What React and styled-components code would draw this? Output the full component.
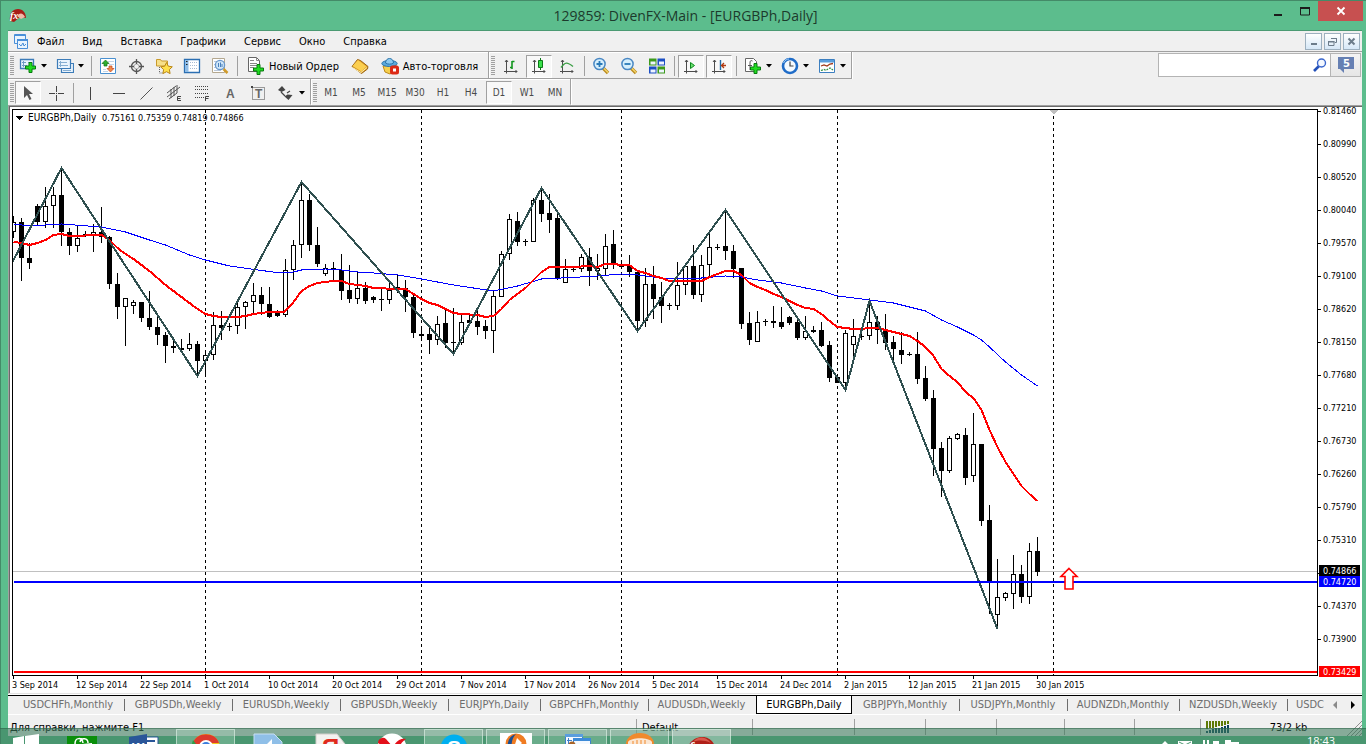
import React from 'react'
import styled, { createGlobalStyle } from 'styled-components'

const ui = `'DejaVu Sans Condensed', 'DejaVu Sans', 'Noto Sans', sans-serif`

const GlobalStyle = createGlobalStyle`
  * {
    box-sizing: border-box;
  }
  body {
    margin: 0;
    background: #ffffff;
    font-family: ${ui};
    font-size: 11px;
    color: #000000;
    overflow: hidden;
  }
  button {
    font: inherit;
    color: inherit;
    background: none;
    border: 0;
    padding: 0;
    margin: 0;
  }
  svg {
    display: block;
    flex: none;
  }
`

const Desktop = styled.div`
  position: relative;
  margin-right: 4px;
  height: 100vh;
  overflow: hidden;
  background: #5cbd8d;
`

const Window = styled.div`
  border: 1px solid #448a68;
  border-width: 1px 0 0 1px;
  padding: 0 4px 8px 7px;
`

const TitleBar = styled.header`
  display: grid;
  grid-template-columns: 1fr auto 1fr;
  height: 29px;
  margin-right: -1px;
`

const AppIcon = styled.div`
  padding: 7px 0 0 1px;
`

const Title = styled.h1`
  margin: 0;
  font-family: 'Open Sans', 'Noto Sans', sans-serif;
  font-size: 14px;
  font-weight: 400;
  line-height: 29px;
  color: #1c3a2c;
`

const WindowButtons = styled.div`
  display: flex;
  justify-content: flex-end;
  align-items: flex-start;
`

const WindowButton = styled.button`
  display: flex;
  justify-content: center;
  align-items: center;
  width: ${(p) => (p.$close ? '45px' : '27px')};
  height: 20px;
  background: ${(p) => (p.$close ? '#c75050' : 'transparent')};
`

const Client = styled.main`
  border-top: 1px solid #4a9a72;
  background: #f0f0f0;
`

const MenuBar = styled.nav`
  display: flex;
  align-items: center;
  height: 21px;
  padding: 0 2px 0 5px;
  border-bottom: 1px solid #a0a0a0;
`

const MenuItem = styled.button`
  padding: 1px 9px 0;
  line-height: 19px;
  &:hover {
    background: #d8e6f2;
  }
`

const Spacer = styled.div`
  flex: 1;
`

const MdiButtons = styled.div`
  display: flex;
  gap: 2px;
`

const MdiButton = styled.button`
  display: flex;
  justify-content: center;
  align-items: center;
  width: 17px;
  height: 17px;
  border: 1px solid #9db0bf;
  background: linear-gradient(#ffffff, #d6e8f7);
`

const ToolRow = styled.div`
  display: flex;
  height: ${(p) => p.$height}px;
`

const ToolBar = styled.div`
  display: flex;
  align-items: center;
  padding: 2px ${(p) => (p.$tight ? 1 : 3)}px 0 0;
  border: 1px solid #a0a0a0;
  border-width: 0 1px 1px 0;
  border-bottom-color: ${(p) => (p.$last ? 'transparent' : '#a0a0a0')};
  box-shadow: inset 0 1px 0 #ffffff, 1px 0 0 #ffffff;
`

const Grip = styled.div`
  width: 4px;
  height: 20px;
  margin: 0 ${(p) => (p.$wide ? 2 : 0)}px 0 2px;
  background: repeating-linear-gradient(#a0a0a0 0 1px, #f0f0f0 1px 2px);
`

const Divider = styled.div`
  width: 1px;
  height: 20px;
  margin: 0 2px 0 3px;
  background: #a0a0a0;
`

const ToolButton = styled.button`
  display: flex;
  justify-content: center;
  align-items: center;
  gap: 4px;
  width: ${(p) => p.$width || 28}px;
  height: 24px;
  color: ${(p) => (p.$dim ? '#4a4a4a' : '#000000')};
  font-size: ${(p) => (p.$dim ? '10px' : '11px')};
  white-space: nowrap;
  &[aria-pressed='true'] {
    width: 26px;
    height: 23px;
    margin: 0 1px;
    border: 1px solid #a0a0a0;
    border-right-color: #ffffff;
    border-bottom-color: #ffffff;
    background: #f8f8f8;
  }
`

const SearchBox = styled.label`
  display: flex;
  align-items: center;
  width: 173px;
  height: 24px;
  margin-top: 1px;
  padding-right: 3px;
  border: 1px solid #b4b4b4;
  background: #ffffff;
`

const SearchInput = styled.input`
  flex: 1;
  min-width: 0;
  border: 0;
  outline: 0;
  font: inherit;
`

const Messages = styled.button`
  display: flex;
  justify-content: center;
  align-items: center;
  width: 31px;
  height: 24px;
  margin: 1px 1px 0 -1px;
  border: 1px solid #b4b4b4;
  background: linear-gradient(#f4f4f4, #e6e6e6);
`

const ChartFrame = styled.section`
  display: grid;
  grid-template-columns: 1fr 44px;
  padding: 3px 0 0 3px;
  border: 1px solid #a0a0a0;
  border-right: 0;
  border-bottom-color: #e3e3e3;
  box-shadow: inset 1px 1px 0 #696969;
  background: #ffffff;
`

const Plot = styled.div`
  border: 1px solid #000000;
  height: 567px;
  overflow: hidden;
`

const Drawing = styled.svg`
  width: 100%;
  height: ${(p) => p.$height}px;
  overflow: ${(p) => (p.$spill ? 'visible' : 'hidden')};
  font-family: ${ui};
  font-size: 9px;
`

const TimeAxis = styled.div`
  grid-column: 1 / -1;
  height: 17px;
`

const Tabs = styled.div`
  display: flex;
  height: 21px;
  border-top: 1px solid #ffffff;
  border-bottom: 1px solid #ffffff;
  overflow: hidden;
`

const TabList = styled.div`
  display: flex;
  flex: 1;
  min-width: 0;
  padding-left: 5px;
  border-top: 1px solid #000000;
  overflow: hidden;
`

const Tab = styled.button`
  position: relative;
  flex: none;
  width: ${(p) => p.$width}px;
  height: 18px;
  padding-right: 2px;
  font-size: 11px;
  line-height: 16px;
  color: #6d6d6d;
  white-space: nowrap;
  overflow: hidden;
  text-align: center;
  &::after {
    content: '';
    position: absolute;
    right: 0;
    top: 3px;
    height: 12px;
    border-right: 1px solid #6d6d6d;
  }
  &[aria-selected='true'] {
    padding: 1px 0 0;
    color: #000000;
    background: #ffffff;
    border: 1px solid #000000;
    border-width: 0 1px 1px;
  }
  &[aria-selected='true']::after,
  &.plain::after {
    display: none;
  }
`

const TabScroll = styled.div`
  display: flex;
  align-items: center;
  justify-content: space-between;
  width: 36px;
  padding: 0 7px 1px;
  border-top: 1px solid #000000;
`

const StatusBar = styled.footer`
  display: flex;
  height: 21px;
  padding-left: 2px;
  line-height: 25px;
`

const Hint = styled.div`
  flex: 1;
`

const Cell = styled.div`
  display: flex;
  align-items: flex-start;
  width: ${(p) => p.$width}px;
  padding-left: 6px;
  background: linear-gradient(#a0a0a0, #a0a0a0) 0 4px / 1px 16px no-repeat;
  svg {
    margin-top: 6px;
  }
`

const Traffic = styled.span`
  flex: 1;
  text-align: center;
`

const TaskBar = styled.nav`
  position: absolute;
  left: 0;
  right: 0;
  bottom: 0;
  display: flex;
  height: 16px;
  background: rgba(59, 123, 91, 0.59);
  border-top: 1px solid rgba(40, 95, 68, 0.5);
  overflow: hidden;
`

const TaskButton = styled.button`
  display: flex;
  align-items: flex-start;
  justify-content: center;
  flex: none;
  width: 59px;
  height: 40px;
  margin-right: 3px;
  padding-top: 3px;
  border: 1px solid ${(p) => (p.$open ? 'rgba(220, 240, 228, 0.65)' : 'transparent')};
  background: ${(p) => {
    if (p.$active) return 'rgba(240, 250, 245, 0.35)'
    return p.$open ? 'rgba(190, 230, 208, 0.28)' : 'none'
  }};
`

const StartButton = styled(TaskButton)`
  width: 52px;
  margin: 0;
  padding: 4px 0 0 0;
`

const Tray = styled.div`
  display: flex;
  margin-left: auto;
  padding: 6px 31px 0 0;
  gap: 68px;
  font-family: 'Open Sans', 'Noto Sans', sans-serif;
  font-size: 11px;
  line-height: 11px;
  color: #ffffff;
`

// [wick top, body top, body bottom, wick bottom, rising], one bar every 8px
const bars = [
  [216, 222, 232, 238, 1], [218, 222, 258, 281, 0], [243, 258, 263, 269, 0],
  [204, 206, 222, 225, 0], [187, 206, 222, 228, 1], [187, 195, 206, 228, 1],
  [168, 195, 232, 246, 0], [228, 232, 246, 255, 0], [226, 238, 246, 252, 1],
  [231, 234, 236, 237, 0], [224, 232, 235, 252, 1], [207, 232, 237, 243, 0],
  [236, 237, 284, 289, 0], [273, 284, 307, 319, 0], [298, 298, 307, 346, 1],
  [300, 302, 306, 314, 1], [302, 302, 318, 322, 0], [291, 318, 327, 330, 0],
  [314, 327, 335, 345, 0], [332, 335, 346, 363, 0], [337, 346, 348, 353, 0],
  [339, 348, 350, 350, 0], [333, 344, 349, 351, 1], [341, 344, 361, 376, 0],
  [352, 355, 361, 376, 1], [312, 325, 355, 360, 1], [311, 325, 328, 340, 0],
  [323, 326, 327, 331, 0], [301, 307, 326, 334, 1], [301, 302, 307, 329, 1],
  [283, 295, 302, 313, 1], [287, 295, 304, 315, 0], [287, 304, 317, 318, 0],
  [310, 312, 316, 317, 0], [259, 270, 315, 317, 1], [240, 245, 270, 280, 1],
  [182, 200, 245, 258, 1], [194, 200, 245, 251, 0], [227, 245, 264, 267, 0],
  [264, 268, 274, 276, 1], [262, 268, 270, 281, 0], [254, 270, 291, 300, 0],
  [265, 290, 299, 303, 0], [272, 288, 299, 304, 1], [282, 288, 301, 304, 0],
  [296, 297, 300, 303, 0], [289, 299, 300, 311, 0], [282, 290, 300, 304, 1],
  [274, 287, 289, 293, 0], [280, 288, 297, 312, 0], [295, 297, 333, 338, 0],
  [329, 334, 336, 340, 0], [328, 334, 340, 354, 0], [316, 324, 340, 345, 1],
  [310, 323, 343, 348, 0], [308, 342, 343, 352, 0], [313, 322, 343, 345, 1],
  [313, 320, 323, 323, 0], [310, 321, 327, 335, 0], [320, 326, 331, 339, 0],
  [291, 296, 331, 353, 1], [251, 254, 297, 297, 1], [214, 219, 254, 260, 1],
  [212, 221, 242, 246, 0], [239, 241, 242, 246, 0], [198, 200, 242, 242, 1],
  [188, 200, 214, 222, 0], [194, 213, 220, 233, 0], [213, 218, 278, 280, 0],
  [259, 269, 283, 283, 1], [267, 269, 270, 272, 0], [254, 257, 269, 272, 1],
  [248, 257, 271, 286, 0], [254, 268, 271, 280, 1], [234, 246, 269, 275, 1],
  [230, 244, 264, 269, 0], [263, 265, 267, 268, 0], [255, 266, 272, 277, 0],
  [270, 272, 321, 331, 0], [268, 284, 321, 327, 1], [266, 284, 299, 319, 0],
  [282, 297, 306, 323, 0], [303, 305, 306, 310, 0], [262, 285, 306, 310, 1],
  [266, 266, 285, 295, 1], [245, 266, 295, 299, 0], [255, 265, 295, 302, 1],
  [232, 247, 265, 278, 1], [244, 247, 248, 250, 0], [210, 246, 251, 260, 0],
  [245, 251, 269, 278, 0], [268, 268, 324, 329, 0], [312, 323, 340, 345, 0],
  [311, 322, 342, 342, 1], [319, 321, 322, 326, 0], [306, 321, 323, 328, 0],
  [307, 322, 327, 329, 0], [316, 317, 323, 325, 0], [316, 322, 338, 340, 0],
  [316, 331, 338, 340, 1], [326, 330, 332, 333, 0], [322, 330, 346, 347, 0],
  [341, 345, 378, 382, 0], [376, 377, 383, 383, 0], [330, 333, 383, 390, 1],
  [319, 336, 345, 361, 1], [327, 336, 337, 340, 0], [301, 322, 336, 340, 1],
  [316, 322, 330, 344, 0], [314, 329, 343, 350, 0], [336, 342, 349, 360, 0],
  [332, 350, 355, 364, 0], [352, 354, 355, 356, 0], [332, 354, 379, 384, 0],
  [366, 378, 399, 401, 0], [390, 398, 449, 476, 0], [442, 448, 471, 497, 0],
  [436, 438, 471, 473, 1], [433, 434, 439, 440, 1], [428, 435, 478, 485, 0],
  [413, 444, 476, 482, 1], [444, 444, 521, 526, 0], [505, 520, 582, 614, 0],
  [559, 597, 615, 629, 1], [592, 593, 598, 601, 1], [555, 574, 594, 609, 1],
  [565, 574, 597, 603, 0], [543, 551, 597, 604, 1], [537, 551, 572, 576, 0]
]

const zigzag =
  '12,262 61,168 197,376 301,182 453,354 541,188 637,331 725,210 845,390 869,301 997,629'

const fastAverage =
  '13,242 21,243 29,245 37,243 45,240 53,235 61,234 69,236 77,236 93,235 101,235 109,240 117,248 125,254 133,259 141,265 149,271 157,278 165,285 173,291 181,297 189,303 197,309 205,314 213,316 221,317 237,317 245,316 253,314 261,313 269,312 283,312 286,310 293,302 301,291 309,286 317,283 333,281 341,281 349,284 365,286 373,288 397,289 405,289 413,294 421,299 429,303 437,305 445,309 453,313 461,314 477,315 485,317 493,316 501,309 509,300 517,294 525,288 533,280 541,272 549,267 573,267 589,266 597,267 605,264 613,264 621,265 629,265 637,271 645,273 653,276 661,278 669,281 701,281 709,277 717,274 725,271 733,271 741,275 749,283 757,287 765,290 773,294 781,297 789,301 797,305 805,308 813,309 821,314 829,321 837,327 853,329 877,328 885,330 901,334 909,336 917,341 925,347 933,356 941,369 949,376 957,382 965,392 973,398 981,410 989,430 997,447 1005,462 1013,474 1021,486 1029,494 1037,501'

const slowAverage =
  '13,224 29,226 61,224 101,227 125,232 149,240 165,245 189,255 205,260 229,266 250,269 280,273 293,272 301,270 325,269 341,270 357,272 373,273 397,275 421,279 453,285 493,291 517,286 541,279 580,277 597,276 621,274 637,275 661,278 701,278 725,276 741,277 757,280 781,283 805,288 821,291 837,296 869,300 893,303 909,307 925,311 941,320 957,327 973,335 981,340 989,347 1005,362 1021,375 1037,386'

const prices = [
  '0.81460', '0.80990', '0.80520', '0.80040', '0.79570', '0.79100', '0.78620',
  '0.78150', '0.77680', '0.77210', '0.76730', '0.76260', '0.75790', '0.75310',
  '', '0.74370', '0.73900'
]

const levels = [
  { price: '0.74866', y: 571, color: '#000000' },
  { price: '0.74720', y: 582, color: '#0000ff' },
  { price: '0.73429', y: 672, color: '#ff0000' }
]

const dates = [
  '3 Sep 2014', '12 Sep 2014', '22 Sep 2014', '1 Oct 2014', '10 Oct 2014',
  '20 Oct 2014', '29 Oct 2014', '7 Nov 2014', '17 Nov 2014', '26 Nov 2014',
  '5 Dec 2014', '15 Dec 2014', '24 Dec 2014', '2 Jan 2015', '12 Jan 2015',
  '21 Jan 2015', '30 Jan 2015'
]

const months = [205, 421, 621, 837, 1053]

const tabs = [
  ['USDCHFh,Monthly', 112], ['GBPUSDh,Weekly', 108], ['EURUSDh,Weekly', 108],
  ['GBPUSDh,Weekly', 108], ['EURJPYh,Daily', 92], ['GBPCHFh,Monthly', 108],
  ['AUDUSDh,Weekly', 107], ['EURGBPh,Daily', 96], ['GBPJPYh,Monthly', 108],
  ['USDJPYh,Monthly', 108], ['AUDNZDh,Monthly', 112], ['NZDUSDh,Weekly', 108]
]

const Bar = ({ x, data }) => {
  const [high, top, bottom, low, up] = data
  return (
    <g>
      <path d={`M${x + 0.5} ${high}V${low}`} stroke="#000" />
      {bottom - top < 3 ? (
        <rect x={x - 2} y={top} width="5" height={bottom - top} />
      ) : (
        <rect
          x={x - 1.5}
          y={top + 0.5}
          width="4"
          height={bottom - top - 1}
          fill={up ? '#fff' : '#000'}
          stroke="#000"
        />
      )}
    </g>
  )
}

const Chart = () => (
  <ChartFrame>
    <Plot>
      <Drawing $height={565} role="img" aria-label="EURGBPh, Daily">
        <g transform="translate(-13 -110)" shapeRendering="crispEdges">
          {months.map((x) => (
            <path key={x} d={`M${x + 0.5} 110V676`} stroke="#000" strokeDasharray="3 3" />
          ))}
          <path d="M1050 110h8l-4 5z" fill="#c0c0c0" />
          <path d="M13 571.5H3000" stroke="#c0c0c0" />
          {bars.map((data, i) => (
            <Bar key={i} x={13 + i * 8} data={data} />
          ))}
          <g transform="translate(.5 0)" fill="none">
            <polyline points={slowAverage} stroke="#0000ff" />
            <polyline points={fastAverage} stroke="#ff0000" strokeWidth="2" />
            <polyline points={zigzag} stroke="#2f4f4f" strokeWidth="2" />
          </g>
          <path d="M14 582H3000" stroke="#0000ff" strokeWidth="2" />
          <path d="M14 672H3000" stroke="#ff0000" strokeWidth="2" />
          <path d="M16 116h7l-3 4h-1z" />
        </g>
        <path
          transform="translate(-13 -110)"
          d="M1069 568.500l8 8h-4v12.500h-8v-12.500h-4z"
          fill="#fff"
          stroke="#ff0000"
          strokeWidth="1.600"
        />
        <text x="15" y="11" fontSize="10">EURGBPh,Daily</text>
        <text x="89" y="11">0.75161 0.75359 0.74819 0.74866</text>
      </Drawing>
    </Plot>
    <Drawing $height={567} $spill>
      {prices.map((price, i) => (
        <g key={i}>
          <path d={`M0 ${i * 33 + 2.5}h3`} stroke="#000" />
          <text x="5" y={i * 33 + 5}>{price}</text>
        </g>
      ))}
      {levels.map(({ price, y, color }) => (
        <g key={price}>
          <rect x="1" y={y - 115} width="41" height="11" fill={color} />
          <text x="5" y={y - 106} fill="#fff">{price}</text>
        </g>
      ))}
    </Drawing>
    <TimeAxis>
      <Drawing $height={17}>
        {dates.map((date, i) => (
          <g key={date}>
            <path d={`M${i * 64 + 1.5} 0v3`} stroke="#000" />
            <text x={i * 64} y="12">{date}</text>
          </g>
        ))}
      </Drawing>
    </TimeAxis>
  </ChartFrame>
)

const Icon = ({ size = 18, width, children }) => (
  <svg
    width={width || size}
    height={size}
    viewBox={`0 0 ${width || size} ${size}`}
    fill="none"
    aria-hidden="true"
  >
    {children}
  </svg>
)

const Plus = ({ x = 6, y = 6 }) => (
  <path
    transform={`translate(${x} ${y})`}
    d="M4 .5h3V4h3.500v3H7v3.500H4V7H.5V4H4z"
    fill="#1fdc1f"
    stroke="#087a10"
  />
)

const Axes = () => (
  <path
    d="M4.500 3v13.500M2 14.500h13M3 5l1.500-2L6 5M13.500 13l1.500 1.500-1.500 1.500"
    stroke="#4c4c4c"
  />
)

const Caret = () => (
  <svg width="6" height="4" aria-hidden="true">
    <path d="M0 0h6L3 3.500z" fill="#000" />
  </svg>
)

const Magnifier = ({ minus }) => (
  <Icon>
    <path d="M11 11l5 5" stroke="#b98a1e" strokeWidth="3.400" />
    <path d="M11.500 11l4.500 4.500" stroke="#f3d468" strokeWidth="1.500" />
    <circle cx="7.500" cy="7" r="5.600" fill="#d6effc" stroke="#4a88c4" strokeWidth="1.500" />
    <path d={minus ? 'M4.500 7h6' : 'M4.500 7h6M7.500 4v6'} stroke="#2a7ab8" strokeWidth="1.800" />
  </Icon>
)

const icons = {
  newChart: (
    <Icon>
      <path d="M1.500 2.500h13v9h-13z" fill="#eaf4fd" stroke="#3d7cb8" strokeWidth="1.300" />
      <path d="M4.500 4v6M3 5.500h4M3 8.500h5M9 5.500h3" stroke="#6f9cc6" />
      <Plus x={6} y={5} />
    </Icon>
  ),
  profiles: (
    <Icon>
      <path d="M5.500 6.500h12v9h-12z" fill="#eaf4fd" stroke="#3d7cb8" strokeWidth="1.200" />
      <path d="M1.500 2.500h13v9h-13z" fill="#eaf4fd" stroke="#3d7cb8" strokeWidth="1.200" />
      <path d="M4.500 4v6M3 5.500h8M3 8.500h9M7 13.500h8" stroke="#86aed2" />
    </Icon>
  ),
  market: (
    <Icon>
      <path d="M1.500 1.500h15v15h-15z" fill="#fff" stroke="#4a90d0" />
      <path d="M9 4.500h6M10 7.500h5M4 12.500h3M4 14.500h5" stroke="#c4d6e8" />
      <path d="M6.500 3l3.500 3.500H8V9H5V6.500H3z" fill="#2fae2f" stroke="#147014" strokeWidth=".7" />
      <path d="M11.500 15l3.500-3.500h-2V9h-3v2.500H8z" fill="#f08a4b" stroke="#c4451c" strokeWidth=".7" />
    </Icon>
  ),
  target: (
    <Icon>
      <circle cx="9.500" cy="9.500" r="5" stroke="#555" strokeWidth="1.300" />
      <circle cx="9.500" cy="9.500" r="2.500" stroke="#aaa" />
      <path d="M9.500 2v5M9.500 12v5M2 9.500h5M12 9.500h5" stroke="#555" strokeWidth="1.300" />
    </Icon>
  ),
  navigator: (
    <Icon>
      <path d="M1.500 2.500h4l1 1.500h6v5h-11z" fill="#f7e08a" stroke="#c89a2c" />
      <path d="M4.500 10v6h4" stroke="#666" strokeDasharray="1 1" />
      <path
        d="M11.500 5.500l1.800 3.700 4 .6-2.900 2.800.7 4-3.600-1.900-3.600 1.900.7-4-2.900-2.800 4-.6z"
        fill="#ffe04e"
        stroke="#b98516"
      />
    </Icon>
  ),
  terminal: (
    <Icon>
      <path d="M1.500 2.500h15v13h-15z" fill="#fff" stroke="#2c6fb2" strokeWidth="1.300" />
      <path d="M2 3h3.500v12H2z" fill="#8fbde8" />
      <path d="M3 4.500h1.500M3 7.500h1.500" stroke="#222" />
      <path d="M7 5.500h8M7 8.500h8M7 11.500h8" stroke="#a8bcd4" strokeDasharray="1 1" />
    </Icon>
  ),
  tester: (
    <Icon>
      <path d="M1.500 1.500h12v14h-12z" fill="#fff" stroke="#b4a890" />
      <path d="M3 4.500h9M3 7.500h9M3 10.500h7M3 13.500h7" stroke="#bcc8d8" />
      <circle cx="9" cy="8" r="4.600" fill="#cfe6f8" stroke="#6a98cc" strokeWidth="1.300" />
      <path d="M7.500 6v4M9.500 5.500v4.500M11 7v3" stroke="#4a80bc" />
      <path d="M12.500 12l4 4" stroke="#cf9a2a" strokeWidth="2.500" />
    </Icon>
  ),
  order: (
    <Icon>
      <path d="M1.500.5h8l3 3v11h-11z" fill="#fff" stroke="#666" />
      <path d="M3 3.500h4M3 6.500h7M3 8.500h7M3 10.500h4M9.500.5v3h3" stroke="#888" />
      <Plus x={6} y={7} />
    </Icon>
  ),
  editor: (
    <Icon>
      <path d="M1 9.500l5.500-7 3 1 7.500 6-.5 2.500-6 4.500z" fill="#d9981e" stroke="#9c6414" />
      <path d="M1.500 9L7 3l8.500 6.500-5 5z" fill="#fbcf50" />
      <path d="M1.500 10.500l8.500 5 6-5" stroke="#fff0b0" />
    </Icon>
  ),
  auto: (
    <Icon>
      <path d="M2 9l2 6 5 2 6-4V8z" fill="#f6cf4c" stroke="#bd8a1c" />
      <ellipse cx="8.500" cy="6.500" rx="7.700" ry="3" fill="#5aa9dc" stroke="#2b74aa" />
      <path d="M4.500 6c0-6 8-6 8 0-2 1.500-6 1.500-8 0z" fill="#8ccaf0" stroke="#2b74aa" />
      <rect x="9" y="8.500" width="9" height="9" rx="2.500" fill="#dd2a16" />
      <rect x="12" y="11.500" width="3" height="3" fill="#fff" />
    </Icon>
  ),
  barChart: (
    <Icon>
      <Axes />
      <path d="M10 4v8M8 10.500h2M10 4.500h2.500" stroke="#12961e" strokeWidth="1.600" />
    </Icon>
  ),
  candles: (
    <Icon>
      <Axes />
      <path d="M10.500 1v12" stroke="#0c7a16" />
      <path d="M8.500 3.500h4v7h-4z" fill="#39e04a" stroke="#0c7a16" />
    </Icon>
  ),
  lineChart: (
    <Icon>
      <Axes />
      <path d="M3 10.500c4-5.500 6-6 12-1" stroke="#3a9e44" strokeWidth="1.300" />
    </Icon>
  ),
  tile: (
    <Icon>
      <path d="M1 1.500h7.500v7H1zM9.500 9.500H17v7H9.500z" fill="#3c9a1c" />
      <path d="M9.500 1.500H17v7H9.500zM1 9.500h7.500v7H1z" fill="#1c4fc4" />
      <path
        d="M2.500 4.500h5v3h-5zM11 4.500h5v3h-5zM2.500 12.500h5v3h-5zM11 12.500h5v3h-5z"
        fill="#eef4ff"
      />
    </Icon>
  ),
  scroll: (
    <Icon>
      <Axes />
      <path d="M8.500 5.500v6l4-3z" fill="#6be070" stroke="#0c8a1c" />
    </Icon>
  ),
  shift: (
    <Icon>
      <Axes />
      <path d="M10.500 3v10" stroke="#1d6aa8" strokeWidth="1.400" />
      <path d="M12 8.500h4M14 6l-2.500 2.500L14 11" stroke="#b03a10" strokeWidth="1.300" />
    </Icon>
  ),
  indicators: (
    <Icon>
      <path d="M1.500 1.500h8l3 3v10h-11z" fill="#fff" stroke="#666" />
      <path d="M8.500 4c-2-1-2.500 0-2.500 2v7M4 8.500h4" stroke="#555" />
      <Plus x={6} y={6} />
    </Icon>
  ),
  clock: (
    <Icon>
      <circle cx="9" cy="9" r="7" fill="#f4faff" stroke="#1f6cc8" strokeWidth="2.600" />
      <path d="M9 4.500V9h3.500" stroke="#444" strokeWidth="1.200" />
      <path d="M2.500 6c1.500-3 3.500-4 5.500-4" stroke="#9fd0f8" />
    </Icon>
  ),
  template: (
    <Icon>
      <path d="M1.500 2.500h15v13h-15z" fill="#fff" stroke="#3c7fc0" />
      <path d="M2 3h14v2.500H2z" fill="#5a9edc" />
      <path d="M3 9l3-1 3 1 3-2 3-.5" stroke="#a03818" strokeWidth="1.300" />
      <path d="M3 13.500l3-1 2 1 2-1.500 2-1 3 2" stroke="#2c8c3c" strokeDasharray="2 1" strokeWidth="1.200" />
    </Icon>
  ),
  cursor: (
    <Icon>
      <path d="M5 2v12l3-3 2.500 5 2-1-2.500-5h4z" fill="#555" />
    </Icon>
  ),
  cross: (
    <Icon>
      <path d="M9.500 2v6M9.500 11v6M2 9.500h6M11 9.500h6" stroke="#444" />
      <path d="M9 9h1v1H9z" fill="#444" />
    </Icon>
  ),
  vertical: (
    <Icon>
      <path d="M9.500 3v13" stroke="#444" />
    </Icon>
  ),
  horizontal: (
    <Icon>
      <path d="M4 9.500h12" stroke="#444" />
    </Icon>
  ),
  trend: (
    <Icon>
      <path d="M3.500 15.500l12-12" stroke="#555" />
    </Icon>
  ),
  channel: (
    <Icon>
      <path d="M2 9l9-7M2 13L15 3M4 15l8-6M6 5v9M9 3v9M12 1v8" stroke="#555" />
      <path d="M16 12.500h-3.500v4H16M12 14.500h3.500" stroke="#444" />
    </Icon>
  ),
  fibo: (
    <Icon>
      <path d="M2 2.500h13M2 5.500h13M2 9.500h13M2 13.500h9" stroke="#444" strokeDasharray="1 1" />
      <path d="M16 12.500h-3.500V17M12 14.500h3.500" stroke="#444" />
    </Icon>
  ),
  letter: (
    <Icon>
      <text x="5" y="14" fontFamily="Liberation Sans, sans-serif" fontSize="12" fontWeight="700" fill="#666">
        A
      </text>
    </Icon>
  ),
  label: (
    <Icon>
      <path d="M3.500 3.500h12v12h-12z" stroke="#444" strokeDasharray="1 1" />
      <path d="M2 2h2v2H2z" fill="#444" />
      <text x="6" y="14" fontFamily="Liberation Sans, sans-serif" fontSize="12" fontWeight="700" fill="#666">
        T
      </text>
    </Icon>
  ),
  arrows: (
    <Icon>
      <path d="M1 6l4-4 3.500 4-4 2zM15.500 11l-4 5-4-3.500 3-2z" fill="#444" />
      <path d="M4 8l4 4M10 9l3-2" stroke="#444" strokeWidth="1.200" />
    </Icon>
  )
}

const Tool = ({ name, label, drop, ...rest }) => (
  <ToolButton aria-label={label} title={label} {...rest}>
    {icons[name]}
    {drop && <Caret />}
  </ToolButton>
)

const menu = ['Файл', 'Вид', 'Вставка', 'Графики', 'Сервис', 'Окно', 'Справка']
const periods = ['M1', 'M5', 'M15', 'M30', 'H1', 'H4', 'D1', 'W1', 'MN']

const TaskIcons = {
  store: (
    <Icon size={30}>
      <path d="M0 3h30v27H0z" fill="#0a8f0a" />
      <path d="M5 12l20-2v20H5z" fill="#fff" />
      <path d="M8 11c0-7 7-7 8-1M13 9c1-5 8-4 8 1" stroke="#fff" strokeWidth="1.500" />
    </Icon>
  ),
  word: (
    <Icon size={30}>
      <path d="M15 4h14v24H15z" fill="#fff" stroke="#2a5699" />
      <path d="M18 8h8M18 12h8" stroke="#2a5699" strokeWidth="2" />
      <path d="M0 4l18-3v29H0z" fill="#2a5699" />
      <text x="3" y="19" fontFamily="Liberation Sans, sans-serif" fontSize="13" fontWeight="700" fill="#fff">
        W
      </text>
    </Icon>
  ),
  chrome: (
    <Icon size={30}>
      <circle cx="15" cy="15" r="14" fill="#f5c518" />
      <path d="M2 10C5-1 24-2 28 10H15a6 6 0 0 0-5 8z" fill="#dd3a2c" />
      <path d="M2 7l9 12v7C2 26-1 15 2 7z" fill="#2e9e48" />
      <circle cx="15" cy="14" r="6" fill="#3b7ddd" stroke="#fff" strokeWidth="2" />
    </Icon>
  ),
  volume: (
    <Icon size={30}>
      <path d="M1 1h20l8 8v21H1z" fill="#8fbfe8" stroke="#c8e0f4" />
      <path d="M8 12h5l6-6v22l-6-6H8z" fill="#fff" />
    </Icon>
  ),
  yandex: (
    <Icon size={32}>
      <path d="M2 1h21l8 10v21H2z" fill="#f4f2f0" stroke="#d0ccc8" />
      <text x="8" y="23" fontFamily="Liberation Sans, sans-serif" fontSize="24" fontWeight="700" fill="#e02a1c">
        Я
      </text>
    </Icon>
  ),
  browser: (
    <Icon size={30}>
      <circle cx="15" cy="15" r="14.500" fill="#fff" />
      <path d="M1 10c0-4 5-7 8-4l7 8c3-6 8-9 13-8-6 4-9 10-10 24h-6c0-8-5-16-12-20z" fill="#e3101a" />
    </Icon>
  ),
  skype: (
    <Icon size={30}>
      <circle cx="15" cy="15" r="13.500" fill="#00aff0" />
      <text x="8" y="22" fontFamily="Liberation Sans, sans-serif" fontSize="21" fontWeight="700" fill="#fff">
        S
      </text>
    </Icon>
  ),
  comet: (
    <Icon size={32}>
      <path d="M0 0h32v32H0z" fill="#fff" />
      <circle cx="16" cy="11" r="10.500" fill="#f07c22" />
      <path d="M16 1a11 11 0 0 0-3 20c-3-9-1-16 3-20z" fill="#1b4f91" />
      <path d="M17 5l5 5-9 8z" fill="#fff" />
    </Icon>
  ),
  terminals: (
    <Icon size={28}>
      <path d="M1.500 1.500h17v17h-17z" fill="#f4f9ff" stroke="#3d7fca" />
      <path d="M1 1h18v3H1z" fill="#5a9ede" />
      <path d="M4.500 5v6M3 7.500h5" stroke="#3d7fca" />
      <path d="M9.500 6.500h17v16h-17z" fill="#f4f9ff" stroke="#3d7fca" />
      <path d="M9 5h18v3H9z" fill="#3d8bd8" />
      <circle cx="8" cy="12" r="3.500" fill="#a86428" />
    </Icon>
  ),
  shell: (
    <Icon size={30}>
      <ellipse cx="15" cy="11" rx="14" ry="11" fill="#f18a2c" />
      <path d="M3 9c3-5 21-5 24 0v9H3z" fill="#fbe6d2" />
      <path d="M8 8v7M12 7v8M16 7v8M20 7v8" stroke="#f18a2c" />
    </Icon>
  ),
  fx: (
    <Icon size={32}>
      <path d="M1 24C0 8 10 3 18 4s13 9 13 20z" fill="#b02018" />
      <path d="M7 9c5-6 12-6 18 1-7-3-12-3-18-1z" fill="#d8584c" />
      <text x="3" y="19" fontFamily="Liberation Serif, serif" fontSize="14" fontStyle="italic" fontWeight="700" fill="#fff">
        fx
      </text>
    </Icon>
  )
}

const tasks = [
  ['store', 'Store'],
  ['word', 'Word'],
  ['chrome', 'Chrome', true],
  ['volume', 'Volume'],
  ['yandex', 'Yandex'],
  ['browser', 'Browser'],
  ['skype', 'Skype', true],
  ['comet', 'Comet', true],
  ['terminals', 'Terminals', true],
  ['shell', 'Shell', true],
  ['fx', 'DivenFX', true, true]
]

const ToolBars = () => (
  <>
    <ToolRow $height={27}>
      <ToolBar>
        <Grip />
        <Tool name="newChart" label="Новый график" drop $width={37} />
        <Tool name="profiles" label="Профили" drop $width={37} />
        <Divider />
        <Tool name="market" label="Обзор рынка" />
        <Tool name="target" label="Окно данных" />
        <Tool name="navigator" label="Навигатор" />
        <Tool name="terminal" label="Терминал" />
        <Tool name="tester" label="Тестер стратегий" />
        <Divider />
        <ToolButton $width={106}>
          {icons.order}
          Новый Ордер
        </ToolButton>
        <Tool name="editor" label="Редактор" />
        <ToolButton $width={111}>
          {icons.auto}
          Авто-торговля
        </ToolButton>
      </ToolBar>
      <ToolBar $tight>
        <Grip $wide />
        <Tool name="barChart" label="Бары" />
        <Tool name="candles" label="Свечи" aria-pressed="true" />
        <Tool name="lineChart" label="Линия" />
        <Divider />
        <ToolButton aria-label="Увеличить">
          <Magnifier />
        </ToolButton>
        <ToolButton aria-label="Уменьшить">
          <Magnifier minus />
        </ToolButton>
        <Tool name="tile" label="Расположить окна" />
        <Divider />
        <Tool name="scroll" label="Автопрокрутка" aria-pressed="true" />
        <Tool name="shift" label="Сдвиг графика" aria-pressed="true" />
        <Divider />
        <Tool name="indicators" label="Индикаторы" drop $width={37} />
        <Tool name="clock" label="Периоды" drop $width={37} />
        <Tool name="template" label="Шаблоны" drop $width={37} />
      </ToolBar>
      <Spacer />
      <SearchBox>
        <SearchInput aria-label="Поиск" />
        <Icon size={14}>
          <path d="M6 8l-5 5" stroke="#2450b8" strokeWidth="2.600" />
          <circle cx="8.500" cy="5" r="4" fill="#f4f8ff" stroke="#3a66cc" strokeWidth="1.400" />
        </Icon>
      </SearchBox>
      <Messages aria-label="Сообщения">
        <Icon size={16}>
          <path d="M0 0h16v12H6v4l-4-4H0z" fill="#6680b3" />
          <text x="5" y="10" fontFamily="DejaVu Sans, sans-serif" fontSize="10" fontWeight="700" fill="#fff">
            5
          </text>
        </Icon>
      </Messages>
    </ToolRow>
    <ToolRow $height={26}>
      <ToolBar $last $tight>
        <Grip />
        <Tool name="cursor" label="Курсор" aria-pressed="true" />
        <Tool name="cross" label="Перекрестие" />
        <Divider />
        <Tool name="vertical" label="Вертикальная линия" />
        <Tool name="horizontal" label="Горизонтальная линия" />
        <Tool name="trend" label="Трендовая линия" />
        <Tool name="channel" label="Канал" />
        <Tool name="fibo" label="Фибоначчи" />
        <Tool name="letter" label="Текст" />
        <Tool name="label" label="Метка" />
        <Tool name="arrows" label="Стрелки" drop $width={37} />
      </ToolBar>
      <ToolBar $last $tight>
        <Grip />
        {periods.map((period) => (
          <ToolButton key={period} $dim aria-pressed={period === 'D1'}>
            {period}
          </ToolButton>
        ))}
      </ToolBar>
    </ToolRow>
  </>
)

const App = () => (
  <Desktop>
    <GlobalStyle />
    <Window>
      <TitleBar>
        <AppIcon>
          <Icon size={16} width={18}>
            <path d="M1 13C0 5 4 1 9 1s8 4 8 9l-6-1-6 5z" fill="#a81c18" />
            <path d="M8 8c3-4 6-3 8 1l-4 2z" fill="#f0b8a8" />
            <text x="1" y="11" fontFamily="Liberation Serif, serif" fontSize="10" fontStyle="italic" fontWeight="700" fill="#fff">
              fx
            </text>
          </Icon>
        </AppIcon>
        <Title>129859: DivenFX-Main - [EURGBPh,Daily]</Title>
        <WindowButtons>
          <WindowButton aria-label="Свернуть">
            <Icon size={12}>
              <path d="M2 9h8v2H2z" fill="#1c1c1c" />
            </Icon>
          </WindowButton>
          <WindowButton aria-label="Развернуть">
            <Icon size={12}>
              <path d="M1.500 3h9v7h-9z" stroke="#1c1c1c" />
              <path d="M1 2h10v2H1z" fill="#1c1c1c" />
            </Icon>
          </WindowButton>
          <WindowButton $close aria-label="Закрыть">
            <Icon size={12}>
              <path d="M2.500 2.500l7 7M9.500 2.500l-7 7" stroke="#fff" strokeWidth="1.800" />
            </Icon>
          </WindowButton>
        </WindowButtons>
      </TitleBar>
      <Client>
        <MenuBar>
          <Icon size={15}>
            <path d="M1.500.5h11v9h-11z" fill="#eaf4fd" stroke="#4a8fd8" />
            <path d="M4.500 5.500h10v9h-10z" fill="#eaf4fd" stroke="#4a8fd8" />
            <path d="M1 1h12v1H1zM4 5h11v2H4z" fill="#4a8fd8" />
            <path d="M6 10l2 2 2-3 1 3 2-2" stroke="#4a8fd8" />
          </Icon>
          {menu.map((item) => (
            <MenuItem key={item}>{item}</MenuItem>
          ))}
          <Spacer />
          <MdiButtons>
            <MdiButton aria-label="Свернуть график">
              <Icon size={9}>
                <path d="M2 6h6v2H2z" fill="#6c7c8a" />
              </Icon>
            </MdiButton>
            <MdiButton aria-label="Восстановить график">
              <Icon size={9}>
                <path d="M3 1.500h5.500v4H7M.5 4.500H6v4H.5z" stroke="#6c7c8a" />
                <path d="M0 4h6.500v1.500H0zM3 1h6v1H3z" fill="#6c7c8a" />
              </Icon>
            </MdiButton>
            <MdiButton aria-label="Закрыть график">
              <Icon size={9}>
                <path d="M1.500 1.500l6 6M7.500 1.500l-6 6" stroke="#6c7c8a" strokeWidth="2" />
              </Icon>
            </MdiButton>
          </MdiButtons>
        </MenuBar>
        <ToolBars />
        <Chart />
        <Tabs>
          <TabList role="tablist">
            {tabs.map(([name, width], i) => (
              <Tab
                key={i}
                role="tab"
                $width={width}
                className={i === 6 ? 'plain' : undefined}
                aria-selected={i === 7}
              >
                {name}
              </Tab>
            ))}
            <Tab role="tab" $width={46} className="plain" aria-selected={false}>
              USDC
            </Tab>
          </TabList>
          <TabScroll>
            <Icon size={8} width={4}>
              <path d="M4 0v8L0 4z" fill="#8a8a8a" />
            </Icon>
            <Icon size={8} width={4}>
              <path d="M0 0v8l4-4z" fill="#000" />
            </Icon>
          </TabScroll>
        </Tabs>
        <StatusBar>
          <Hint>Для справки, нажмите F1</Hint>
          <Cell $width={116}>Default</Cell>
          <Cell $width={102} />
          <Cell $width={71} />
          <Cell $width={71} />
          <Cell $width={68} />
          <Cell $width={70} />
          <Cell $width={66} />
          <Cell $width={162}>
            <Icon size={12} width={24}>
              <path d="M0 0h2v8H0zM3 0h2v7H3zM6 0h2v7H6zM9 0h2v6H9zM12 0h2v5h-2zM15 0h2v5h-2zM18 0h2v4h-2zM21 0h2v3h-2z" fill="#5f7a06" />
              <path d="M0 10h2v2H0zM3 9h2v3H3zM6 8h2v4H6zM9 7h2v5H9zM12 7h2v5h-2zM15 6h2v6h-2zM18 5h2v7h-2zM21 4h2v8h-2z" fill="#0c3f5c" />
            </Icon>
            <Traffic>73/2 kb</Traffic>
            <Icon size={15}>
              <path d="M0 15L15 0M4 15L15 4M8 15l7-7M12 15l3-3" stroke="#8c8c8c" />
            </Icon>
          </Cell>
        </StatusBar>
      </Client>
    </Window>
    <TaskBar>
      <StartButton aria-label="Пуск">
        <Icon size={26}>
          <path d="M0 4l11-2v11H0zM12 2l14-2v13H12z" fill="#fff" />
        </Icon>
      </StartButton>
      {tasks.map(([name, label, open, active]) => (
        <TaskButton key={name} aria-label={label} $open={open} $active={active}>
          {TaskIcons[name]}
        </TaskButton>
      ))}
      <Tray>
        <Icon size={10} width={78}>
          <path d="M0 10l4-4 4 4zM17 6h14v4H17zM42 5h2v5h-2zM46 5h2v5h-2zM52 6h6v4h-6zM64 5h6v5h-6zM70 7h8v3h-8z" fill="#fff" />
          <path d="M18 7l6 3 6-3" stroke="#48966f" />
        </Icon>
        <time>18:43</time>
      </Tray>
    </TaskBar>
  </Desktop>
)

export default App
